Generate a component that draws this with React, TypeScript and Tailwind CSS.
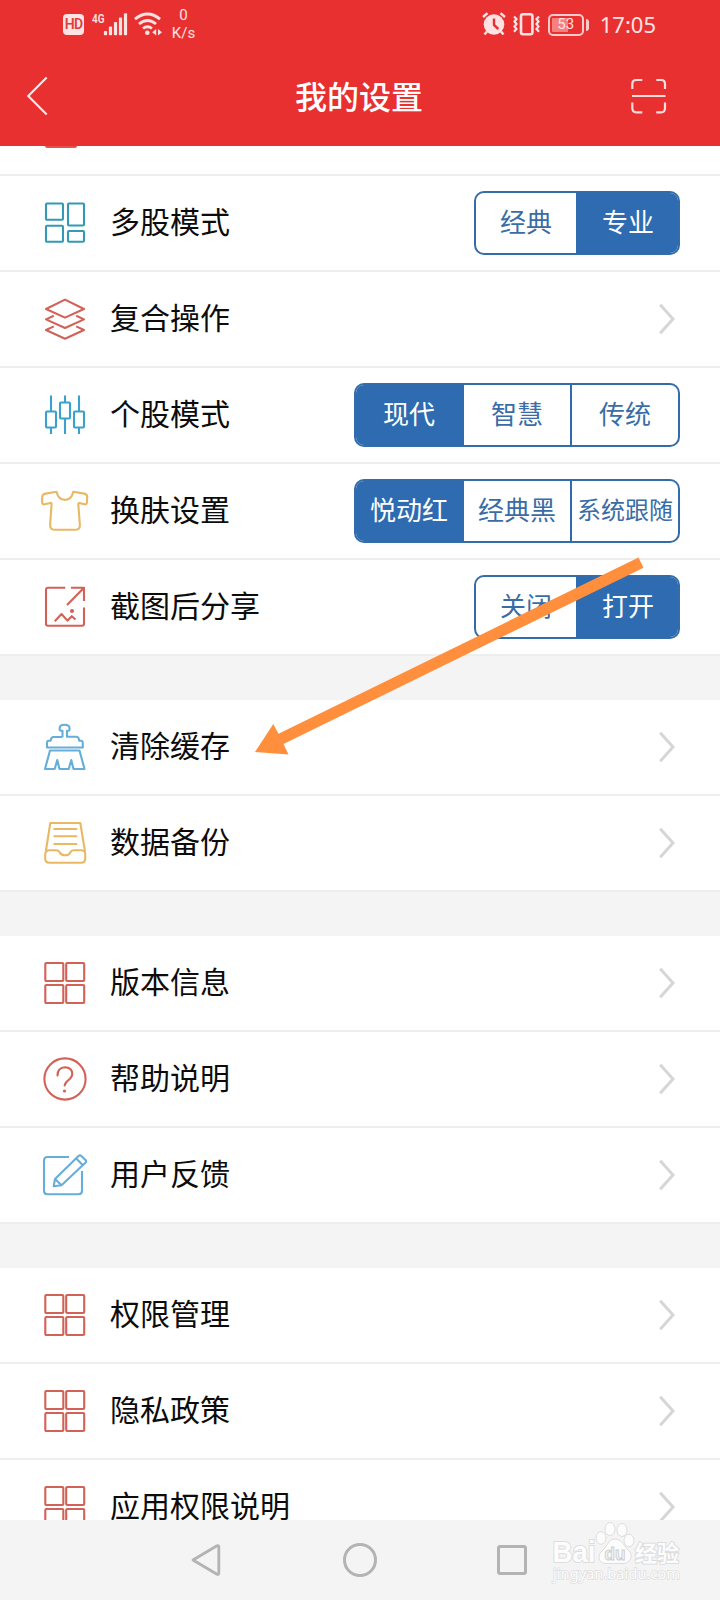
import { useState } from "react";
import type { ReactNode } from "react";

const RED = "#d26257";
const TEAL = "#3399b4";
const YELLOW = "#e9b865";
const SKY = "#66aed9";

const Icon = ({ color, children }: { color: string; children: ReactNode }) => (
    <svg className="w-12 h-12 shrink-0" viewBox="0 0 48 48" fill="none" stroke={color} strokeWidth="2.1" strokeLinejoin="round">
        {children}
    </svg>
);

const GridIcon = () => (
    <Icon color={RED}>
        <rect x="4.3" y="4" width="18" height="18" rx="1" />
        <rect x="25.2" y="4" width="18" height="18" rx="1" />
        <rect x="4.3" y="26" width="18" height="18" rx="1" />
        <rect x="25.2" y="26" width="18" height="18" rx="1" />
    </Icon>
);

const icons: Record<string, ReactNode> = {
    multi: (
        <Icon color={TEAL}>
            <rect x="5" y="4.5" width="17" height="16.2" rx="1" />
            <rect x="27" y="4.5" width="16" height="22" rx="1" />
            <rect x="5" y="26.8" width="17" height="16" rx="1" />
            <rect x="27" y="32" width="16" height="10.8" rx="1" />
        </Icon>
    ),
    layers: (
        <Icon color={RED}>
            <path d="M24 4.6 43 14 24 22.6 5 14Z" />
            <path d="M12.8 20.8 5 24.4 24 33 43 24.4 35.2 20.8" />
            <path d="M12.8 31.4 5 35 24 43.8 43 35 35.2 31.4" />
        </Icon>
    ),
    candle: (
        <Icon color="#3aa0cd">
            <rect x="5" y="20.5" width="10" height="16" rx="1" />
            <rect x="19" y="11.5" width="10" height="16" rx="1" />
            <rect x="33" y="20.5" width="10" height="16" rx="1" />
            <path d="M10 4.5v16M10 36.5v6.5M24 4.5v7M24 27.5v15.5M38 4.5v16M38 36.5v6.5" />
        </Icon>
    ),
    shirt: (
        <Icon color={YELLOW}>
            <path d="M15.5 4.8 4.5 6.6Q1.4 7.2 1.2 10L1.1 15Q1.2 17.9 3.7 17.3L9.5 15.9Q10.6 15.7 10.6 17.2L9.1 37.5Q9 42.6 13.3 42.7H35Q38.8 42.6 38.9 38.5L37.3 17.2Q37.3 15.7 38.5 16L43.3 17.3Q45.8 17.9 46 15L46.2 9.5Q46 7.2 43.2 6.6L32.3 4.8Q30.5 12.7 24 12.9 17.3 12.7 15.5 4.8Z" />
        </Icon>
    ),
    share: (
        <Icon color={RED}>
            <path d="M24.3 4.8H7Q5 4.8 5 6.8V40.8Q5 42.8 7 42.8H41Q43 42.8 43 40.8V24.6M30 4.8H43V18M43 4.8 26 22" />
            <path d="M13.8 38.2 20.5 31 26.5 37.6 30.8 33.2 34.5 36.5" />
            <circle cx="31" cy="28" r="1" fill={RED} />
        </Icon>
    ),
    broom: (
        <Icon color={SKY}>
            <path d="M21.5 14V7.8H20.2Q18.6 7.7 18.6 5.5 18.6 1.7 23.5 1.7 28.6 1.7 28.6 5.5 28.6 7.7 27.2 7.8H26V13.8H35.5Q38 14 38.2 17.8H40.2Q41.8 18 41.8 20V24.5H6V20Q6 18 7.5 17.8H9.5Q10 14 12.5 14H21.5" />
            <path d="M9 27.5H38.5L43.5 46H32.5L30.3 37 27.7 46H18.5L16.3 37 13.7 46H4L9 27.5Z" />
        </Icon>
    ),
    backup: (
        <Icon color={YELLOW}>
            <path d="M4.8 32.5 9.3 4H39.3L44 32.5" />
            <path d="M12.5 10H36.2M12.5 17.3H36.2M12.5 25H36.2M4.2 36Q4.2 31.3 8.5 31.3H15.5Q18 31.4 18.8 33.5 20 36.3 24 36.3 28 36.3 29.3 33.5 30.2 31.4 32.5 31.3H40.5Q44.2 31.5 44.2 35V39.5Q44.2 43.8 40 43.8H8.5Q4.2 43.8 4.2 39.5Z" />
        </Icon>
    ),
    grid: <GridIcon />,
    help: (
        <Icon color={RED}>
            <circle cx="24" cy="24" r="20.6" />
            <path d="M16.5 20.5Q16.7 12.3 24 12.2 31 12.5 31.3 18.8 31.3 22 27.3 25.3 23.8 28.2 23.7 30.5" strokeLinecap="round" />
            <circle cx="23.5" cy="36" r="1.6" fill={RED} stroke="none" />
        </Icon>
    ),
    edit: (
        <Icon color={SKY}>
            <path d="M28 6H6.5Q3 6 3 9.5V39.7Q3 43.2 6.5 43.2H37.5Q41 43.2 41 39.7V20" />
            <path d="M12.7 35.2 14 28 37.5 5Q39 3.8 40.3 5L44.5 9Q45.8 10.3 44.4 11.7L20.5 34.2ZM14 28 20.5 34.2M35.3 7.6 41.8 14.2" />
        </Icon>
    ),
};

type Item = { icon: string; label: string; options?: string[]; selected?: number };

const groups: Item[][] = [
    [
        { icon: "multi", label: "多股模式", options: ["经典", "专业"], selected: 1 },
        { icon: "layers", label: "复合操作" },
        { icon: "candle", label: "个股模式", options: ["现代", "智慧", "传统"], selected: 0 },
        { icon: "shirt", label: "换肤设置", options: ["悦动红", "经典黑", "系统跟随"], selected: 0 },
        { icon: "share", label: "截图后分享", options: ["关闭", "打开"], selected: 1 },
    ],
    [
        { icon: "broom", label: "清除缓存" },
        { icon: "backup", label: "数据备份" },
    ],
    [
        { icon: "grid", label: "版本信息" },
        { icon: "help", label: "帮助说明" },
        { icon: "edit", label: "用户反馈" },
    ],
    [
        { icon: "grid", label: "权限管理" },
        { icon: "grid", label: "隐私政策" },
        { icon: "grid", label: "应用权限说明" },
    ],
];

const Segmented = ({ options, selected }: { options: string[]; selected: number }) => {
    const [active, setActive] = useState(selected);
    return (
        <div className={`flex h-16 overflow-hidden rounded-[10px] border-2 border-[#336ca9] ${options.length === 2 ? "w-[206px]" : "w-[326px]"}`}>
            {options.map((option, index) => (
                <button
                    key={option}
                    onClick={() => setActive(index)}
                    className={`flex flex-1 items-center justify-center whitespace-nowrap pb-[5px] ${option.length > 3 ? "text-[24px]" : "text-[26px]"} ${index > 0 ? "border-l-2 border-[#2e6bb0]" : ""} ${active === index
                        ? "bg-[#2e6bb0] text-white"
                        : "text-[#3a6ca6]"
                        }`}
                >
                    {option}
                </button>
            ))}
        </div>
    );
};

const Row = ({ item }: { item: Item }) => (
    <div className="flex h-24 shrink-0 items-center border-b-2 border-[#eeeeee] bg-white pl-[41px] pr-10">
        {icons[item.icon]}
        <span className="ml-[21px] grow pb-[7px] text-[30px] leading-[36px] text-[#0c0c0c]">{item.label}</span>
        {item.options ? (
            <Segmented options={item.options} selected={item.selected ?? 0} />
        ) : (
            <svg className="mr-[5px] h-8 w-4" viewBox="0 0 16 32" fill="none" stroke="#d6d6d6" strokeWidth="3">
                <path d="M1.2 1.7 14 16 1.2 30.3" />
            </svg>
        )}
    </div>
);

const StatusBar = () => (
    <div className="flex h-12 items-center justify-between pl-[63px] pr-16 text-[#ffe3e3]">
        <div className="flex items-center">
            <div className="mt-[1px] flex h-[21px] w-[21px] items-center justify-center rounded-[4px] bg-[#ffe3e3] font-['Roboto'] text-[14px] font-semibold tracking-tighter text-[#d9403f]">HD</div>
            <svg className="ml-[8px] h-6 w-[36px]" viewBox="0 0 36 24" fill="currentColor">
                <text x="0" y="11" fontFamily="Roboto" fontSize="13.5" fontWeight="600" textLength="12.5" lengthAdjust="spacingAndGlyphs">4G</text>
                <rect x="11.9" y="19" width="3.2" height="4.2" rx="1" />
                <rect x="16.9" y="14.5" width="3.2" height="8.7" rx="1" />
                <rect x="21.9" y="10" width="3.2" height="13.2" rx="1" />
                <rect x="26.9" y="5.5" width="3.2" height="17.7" rx="1" />
                <rect x="31.9" y="1.2" width="3.2" height="22" rx="1" />
            </svg>
            <svg className="ml-[6px] h-6 w-7" viewBox="0 0 28 24" fill="none" stroke="currentColor" strokeWidth="2.9">
                <path d="M1 7.2Q13.5-3 26 7.2M5 12Q13.5 4.8 22 12M9 16.5Q13.5 12.8 18 16.5" />
                <circle cx="13.3" cy="20.8" r="2.3" fill="currentColor" stroke="none" />
                <path d="M22.2 17v6.5l-4-3.2ZM24 17v6.5l4-3.2Z" fill="currentColor" stroke="none" />
            </svg>
            <div className="ml-[10px] flex w-[23px] flex-col items-center font-['Roboto'] text-[15px] leading-[18px]">
                <span>0</span>
                <span>K/s</span>
            </div>
        </div>
        <div className="flex items-center">
            <svg className="h-6 w-6" viewBox="0 0 24 24" fill="currentColor">
                <circle cx="12" cy="12.5" r="10.3" />
                <path d="M1 5 5.5 1.2M18.5 1.2 23 5M5 19.5 2.5 22.5M19 19.5 21.5 22.5" stroke="currentColor" strokeWidth="2.4" />
                <path d="M12 6.5V13L16.3 17" fill="none" stroke="#e83030" strokeWidth="2.4" />
            </svg>
            <svg className="ml-[7px] h-6 w-[27px]" viewBox="0 0 27 24" fill="none" stroke="currentColor">
                <rect x="8" y="2.3" width="11.4" height="20" rx="2" strokeWidth="2.6" />
                <path d="M1 4.5 3.5 7 1.5 9.5 3.5 12 1.5 14.5 3.5 17 1 19.8M26 4.5 23.5 7 25.5 9.5 23.5 12 25.5 14.5 23.5 17 26 19.8" strokeWidth="2.2" />
            </svg>
            <div className="ml-2 mt-[1px] flex items-center gap-[2px]">
                <div className="flex h-[22px] w-9 items-center justify-center rounded-[5px] border-2 border-[#ffcaca] bg-[linear-gradient(90deg,#f58080_55%,transparent_55%)] bg-clip-content px-[2px] py-[2px] font-['Roboto'] text-[15px] leading-none">53</div>
                <div className="h-3 w-[3px] rounded-r bg-[#ffcaca]" />
            </div>
            <span className="ml-[11px] font-['Noto_Sans'] text-[22px] leading-6">17:05</span>
        </div>
    </div>
);

const Header = () => (
    <header className="h-[146px] shrink-0 bg-[#e83030]">
        <StatusBar />
        <div className="grid h-[98px] grid-cols-[1fr_auto_1fr] items-center pl-[27px] pr-[53px] text-white">
            <svg className="mb-[2px] h-10 w-[21px]" viewBox="0 0 21 40" fill="none" stroke="#ffe9e9" strokeWidth="2.1">
                <path d="M19.7 1.5 1.3 20 19.7 38.5" />
            </svg>
            <h1 className="ml-[24px] pb-[4px] font-['KaiTi','Noto_Sans_CJK_SC',sans-serif] text-[32px] font-medium leading-none">我的设置</h1>
            <svg className="mb-[2px] h-9 w-9 justify-self-end" viewBox="0 0 36 36" fill="none" stroke="#ffdcdc" strokeWidth="2.2">
                <path d="M1.3 11V6Q1.3 2 5.3 2H11.3M25.3 2H30.3Q34 2 34 6V11M1.3 24.5V30Q1.3 34.3 5.3 34.3H11.3M25.3 34.3H30.3Q34 34.3 34 30V24.5M1 18H34.5" />
            </svg>
        </div>
    </header>
);

const Watermark = () => (
    <svg className="absolute left-[548px] top-0 h-[68px] w-[140px]" viewBox="0 0 140 68" fill="#fcfcfc" stroke="#dddddd" strokeWidth="1">
        <g paintOrder="stroke" strokeWidth="2">
            <text x="4.5" y="42" fontFamily="Liberation Sans" fontSize="30" fontWeight="700" textLength="43" lengthAdjust="spacingAndGlyphs">Bai</text>
            <text x="87" y="41" fontFamily="Noto Sans CJK SC" fontSize="22" fontWeight="700">经验</text>
            <text x="5" y="59" fontFamily="Noto Sans" fontSize="15" strokeWidth="1.4" textLength="127" lengthAdjust="spacingAndGlyphs">jingyan.baidu.com</text>
        </g>
        <ellipse cx="53" cy="18" rx="5" ry="6.3" />
        <ellipse cx="62" cy="9" rx="5" ry="6.5" />
        <ellipse cx="74" cy="10" rx="5" ry="6.5" />
        <ellipse cx="81" cy="20.5" rx="5" ry="6.3" />
        <path d="M67 19C75 19 76 27 81 31 86 36 82 44 74 43.5H58C50 44 49 35 54 31 60 26 60 19 67 19Z" />
        <text x="56.5" y="40" fill="#f4f4f4" stroke="#cfcfcf" fontFamily="Liberation Sans" fontSize="19" fontWeight="700" textLength="21" lengthAdjust="spacingAndGlyphs">du</text>
    </svg>
);

const NavBar = () => (
    <nav className="relative h-20 shrink-0 bg-[#f4f4f4]">
        <div className="flex h-20 items-center pl-[191px]">
            <svg className="h-9 w-[30px]" viewBox="0 0 30 36" fill="none" stroke="#b3b3b3" strokeWidth="2.8" strokeLinejoin="round">
                <path d="M2 18 26 3.8Q27.8 3 27.8 5V31Q27.8 33 26 32.2Z" />
            </svg>
            <div className="ml-[122px] h-[34px] w-[34px] rounded-full border-[3px] border-[#b3b3b3]" />
            <div className="ml-[120px] h-[30px] w-[30px] rounded-[3px] border-[3px] border-[#b3b3b3]" />
        </div>
        <Watermark />
    </nav>
);

export default function App() {
    return (
        <div className="relative flex h-[1600px] w-[720px] flex-col overflow-hidden bg-[#f4f4f4] font-['Noto_Sans_CJK_SC',sans-serif]">
            <Header />
            <main className="min-h-0 flex-1 overflow-hidden">
                {/* bottom edge of the row scrolled under the header */}
                <div className="h-[30px] border-b-2 border-[#eeeeee] bg-white pl-[45px]">
                    <div className="h-[2px] w-8 rounded-b bg-[#e8504a]" />
                </div>
                <div className="flex flex-col gap-11">
                    {groups.map((group, index) => (
                        <section key={index}>
                            {group.map((item) => (
                                <Row key={item.label} item={item} />
                            ))}
                        </section>
                    ))}
                </div>
            </main>
            <NavBar />
            <svg className="pointer-events-none absolute left-0 top-0 h-[800px] w-[720px]" viewBox="0 0 720 800" fill="#ff8f3c">
                <path d="M638.5 557.5 643.5 567.7 283.5 744 288.5 754.5 255 752 273.3 724 278.5 733.7Z" />
            </svg>
        </div>
    );
}
